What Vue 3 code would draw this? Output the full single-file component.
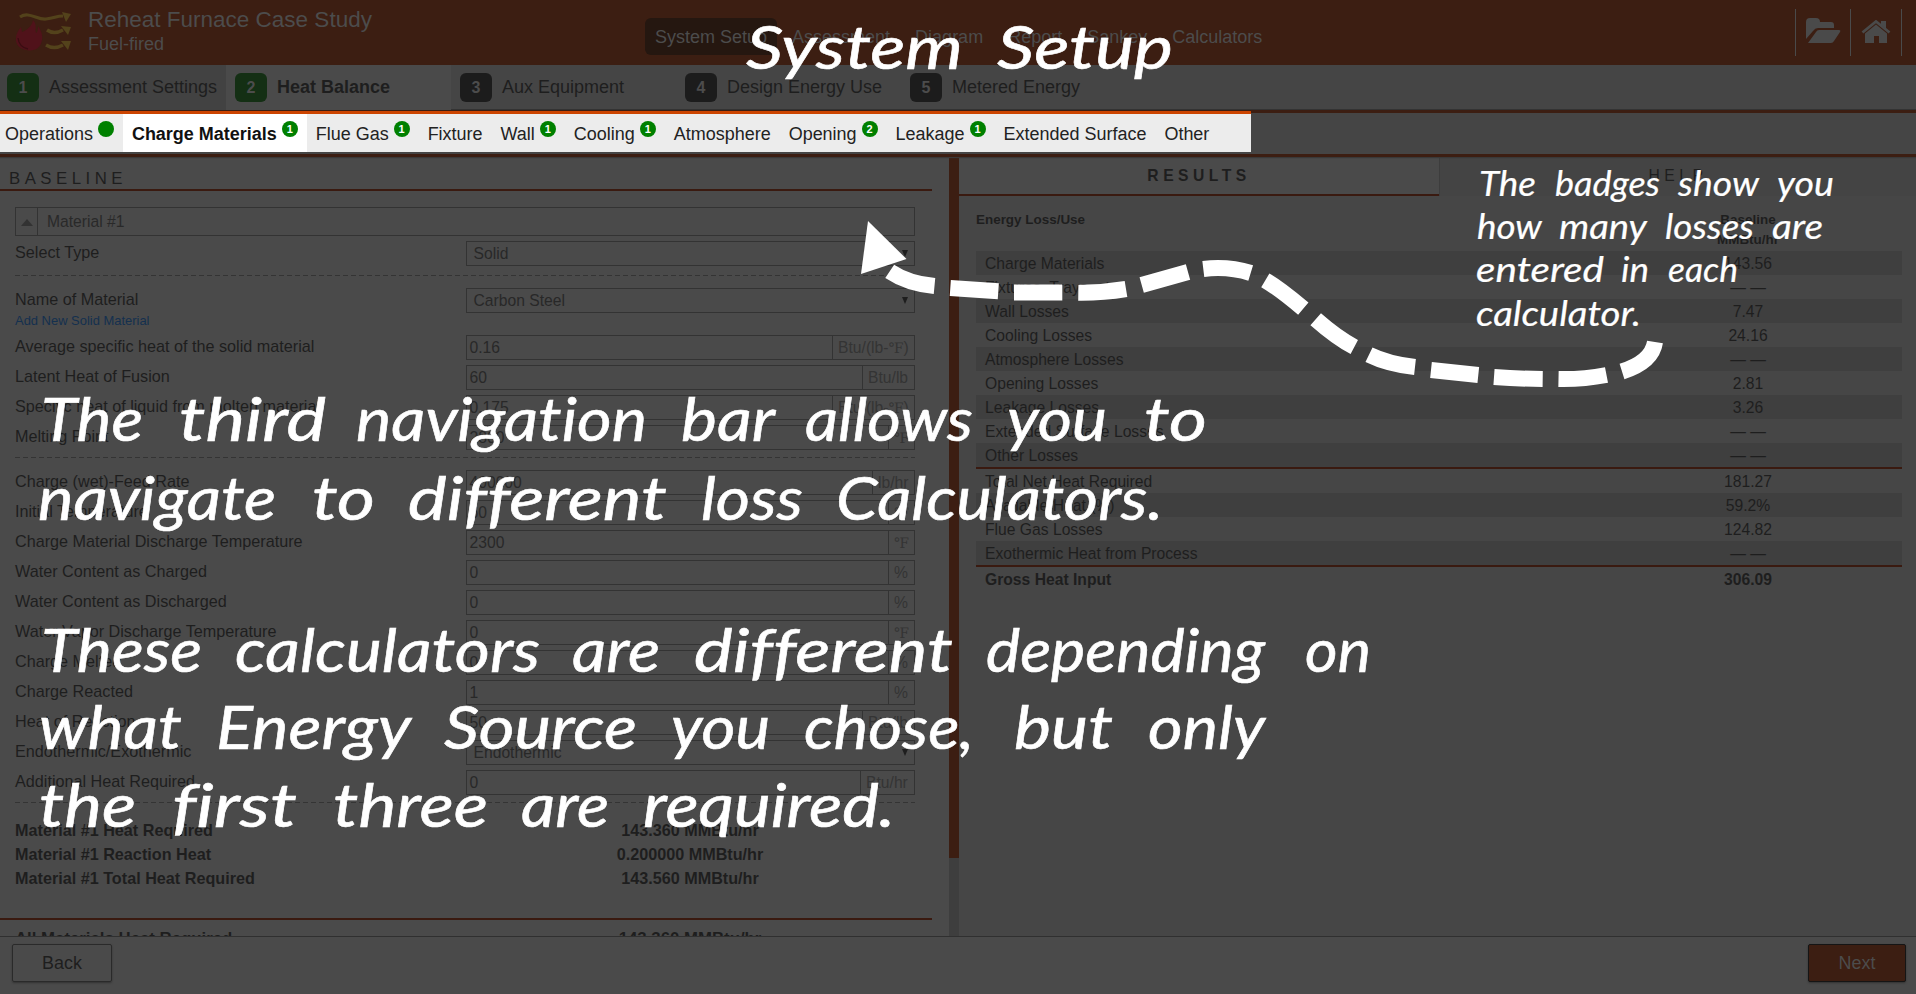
<script setup>
const nav = ['System Setup', 'Assessment', 'Diagram', 'Report', 'Sankey', 'Calculators']
const steps = ['Assessment Settings', 'Heat Balance', 'Aux Equipment', 'Design Energy Use', 'Metered Energy']
const tabs = [
  { t: 'Operations', b: ' ' },
  { t: 'Charge Materials', b: '1' },
  { t: 'Flue Gas', b: '1' },
  { t: 'Fixture' },
  { t: 'Wall', b: '1' },
  { t: 'Cooling', b: '1' },
  { t: 'Atmosphere' },
  { t: 'Opening', b: '2' },
  { t: 'Leakage', b: '1' },
  { t: 'Extended Surface' },
  { t: 'Other' }
]
const groupA = [
  { l: 'Average specific heat of the solid material', v: '0.16', u: 'Btu/(lb-', f: true, e: ')', w: 82 },
  { l: 'Latent Heat of Fusion', v: '60', u: 'Btu/lb', w: 52 },
  { l: 'Specific heat of liquid from molten material', v: '0.175', u: 'Btu/(lb-', f: true, e: ')', w: 82 },
  { l: 'Melting Point', v: '2800', f: true, w: 26 }
]
const groupB = [
  { l: 'Charge (wet)-Feed Rate', v: '400000', u: 'lb/hr', w: 42 },
  { l: 'Initial Temperature', v: '60', f: true, w: 26 },
  { l: 'Charge Material Discharge Temperature', v: '2300', f: true, w: 26 },
  { l: 'Water Content as Charged', v: '0', u: '%', w: 26 },
  { l: 'Water Content as Discharged', v: '0', u: '%', w: 26 },
  { l: 'Water Vapor Discharge Temperature', v: '0', f: true, w: 26 },
  { l: 'Charge Melted', v: '0', u: '%', w: 26 },
  { l: 'Charge Reacted', v: '1', u: '%', w: 26 },
  { l: 'Heat of Reaction', v: '50', u: 'Btu/lb', w: 52 },
  { l: 'Endothermic/Exothermic', v: 'Endothermic', select: true },
  { l: 'Additional Heat Required', v: '0', u: 'Btu/hr', w: 54 }
]
const summary = [
  ['Material #1 Heat Required', '143.360 MMBtu/hr'],
  ['Material #1 Reaction Heat', '0.200000 MMBtu/hr'],
  ['Material #1 Total Heat Required', '143.560 MMBtu/hr']
]
const results = [
  ['Charge Materials', '143.56'],
  ['Fixtures, Trays, etc.', '— —'],
  ['Wall Losses', '7.47'],
  ['Cooling Losses', '24.16'],
  ['Atmosphere Losses', '— —'],
  ['Opening Losses', '2.81'],
  ['Leakage Losses', '3.26'],
  ['Extended Surface Losses', '— —'],
  ['Other Losses', '— —'],
  ['Total Net Heat Required', '181.27'],
  ['Available Heat (%)', '59.2%'],
  ['Flue Gas Losses', '124.82'],
  ['Exothermic Heat from Process', '— —'],
  ['Gross Heat Input', '306.09']
]
/* Annotation lines: baseline y, then [word, left, right] */
const big = [
  { y: 69, w: [['System', 746, 963], ['Setup', 997, 1173]] },
  { y: 441, w: [['The', 41, 143], ['third', 179, 326], ['navigation', 356, 647], ['bar', 681, 775], ['allows', 805, 973], ['you', 1007, 1107], ['to', 1144, 1207]] },
  { y: 520, w: [['navigate', 38, 276], ['to', 312, 375], ['different', 408, 667], ['loss', 701, 803], ['Calculators.', 836, 1163]] },
  { y: 672, w: [['These', 41, 202], ['calculators', 235, 540], ['are', 572, 660], ['different', 694, 953], ['depending', 986, 1265], ['on', 1305, 1371]] },
  { y: 749, w: [['what', 39, 182], ['Energy', 216, 411], ['Source', 444, 637], ['you', 671, 770], ['chose,', 804, 974], ['but', 1014, 1113], ['only', 1148, 1265]] },
  { y: 827, w: [['the', 39, 136], ['first', 172, 297], ['three', 333, 488], ['are', 521, 609], ['required.', 643, 895]] }
]
const small = [
  { y: 196, w: [['The', 1479, 1536], ['badges', 1555, 1660], ['show', 1678, 1759], ['you', 1777, 1834]] },
  { y: 239, w: [['how', 1477, 1542], ['many', 1559, 1647], ['losses', 1665, 1754], ['are', 1772, 1823]] },
  { y: 282, w: [['entered', 1476, 1604], ['in', 1621, 1649], ['each', 1668, 1738]] },
  { y: 326, w: [['calculator.', 1476, 1641]] }
]
const dashes = [
  'M889.7 271.3Q908 283.5 934.5 286', 'M950.3 288L998.3 291.3', 'M1014 292.5H1062.3',
  'M1078.3 292.7Q1102 293 1126 289', 'M1141.7 285L1188 272', 'M1203.3 269Q1228 266 1250.7 273',
  'M1265.3 280.3Q1280 289 1303.3 308.7', 'M1315.7 319.3Q1337 338 1354.3 347', 'M1369 354.7Q1388 364 1415 367',
  'M1431 370L1478.3 375', 'M1494 377Q1518 378.7 1542.7 379', 'M1558.5 379Q1583 379.5 1606.5 375',
  'M1622 371.5Q1652 362 1655 342'
].join('')
</script>

<template>
  <div class="page">
    <header class="top">
      <svg class="logo" width="58" height="42" viewBox="14 11 58 42">
        <path d="M20 17C29 11 37 20 46 19S56 16 63 16" fill="none" stroke="#53421b" stroke-width="3.2" />
        <path d="M62 12L71 14L66 22Z" fill="#53421b" />
        <path d="M47 30Q54 35 63 30" fill="none" stroke="#53421b" stroke-width="3.4" />
        <path d="M61 26L71 27L68 35Z" fill="#53421b" />
        <path d="M46 45Q54 50 63 45" fill="none" stroke="#53421b" stroke-width="3.4" />
        <path d="M61 41L71 41L68 50Z" fill="#53421b" />
        <path d="M33 20C38 25 34 31 36.500 33C38 31 38 28 38 26C41 31 43 35 42 40C41 47 36 51 29 50.500C21 50 15 45 16 38C16 34 18 31 21 27L22 32C27 30 32 26 33 20Z" fill="#50121a" />
        <path d="M18 38Q19 47 28 49" fill="none" stroke="#3a0d12" stroke-width="1.3" />
      </svg>
      <div class="names">
        <div class="name">Reheat Furnace Case Study</div>
        <div class="kind">Fuel-fired</div>
      </div>
      <nav class="mainnav">
        <span v-for="(n, i) in nav" :key="n" :class="{ on: i === 0 }">{{ n }}</span>
      </nav>
      <div class="tools">
        <div class="tool folder">
          <svg width="35" height="26" viewBox="0 0 35 26"><path d="M0 21V4Q0 0 4 0H10Q14 0 14 4H25Q28 4 28 7V10H12Q9 10 7 13Z M2 25L10 14Q11 12 13 12H33Q35 12 34 14L28 23Q27 25 25 25Z" fill="#4a4a4a" /></svg>
        </div>
        <div class="tool house">
          <svg width="30" height="24" viewBox="0 0 30 24"><path d="M1.5 12.5L15 1.5L28.5 12.5" fill="none" stroke="#4a4a4a" stroke-width="2.8" /><path d="M20 1H25V9L20 5ZM4 13.5L15 4.5L26 13.5V23H18V16H13V23H4Z" fill="#4a4a4a" /></svg>
        </div>
      </div>
    </header>

    <div class="steps">
      <div v-for="(s, i) in steps" :key="s" class="step" :class="{ cur: i === 1 }">
        <b :class="{ done: i < 2 }">{{ i + 1 }}</b><span>{{ s }}</span>
      </div>
    </div>

    <div class="tabbar">
      <div class="tabs">
        <div v-for="(t, i) in tabs" :key="t.t" class="tab" :class="{ act: i === 1 }">
          {{ t.t }}<i v-if="t.b">{{ t.b }}</i>
        </div>
      </div>
    </div>

    <main class="body">
      <section class="left">
        <h2>BASELINE</h2>
        <div class="form">
          <div class="mat"><span class="tog"><svg width="12" height="7" viewBox="0 0 12 7"><path d="M6 0L12 7H0Z" fill="#323232" /></svg></span><span>Material #1</span></div>
          <div class="row"><label>Select Type</label><div class="box sel"><span>Solid</span><em></em></div></div>
          <div class="dash"></div>
          <div class="row named"><label>Name of Material</label><div class="box sel"><span>Carbon Steel</span><em></em></div></div>
          <div class="link">Add New Solid Material</div>
          <div v-for="r in groupA" :key="r.l" class="row">
            <label>{{ r.l }}</label>
            <div class="box"><span>{{ r.v }}</span><u :style="{ width: r.w + 'px' }">{{ r.u }}<q v-if="r.f">℉</q>{{ r.e }}</u></div>
          </div>
          <div class="dash d2"></div>
          <div v-for="r in groupB" :key="r.l" class="row">
            <label>{{ r.l }}</label>
            <div v-if="r.select" class="box sel"><span>{{ r.v }}</span><em></em></div>
            <div v-else class="box"><span>{{ r.v }}</span><u :style="{ width: r.w + 'px' }">{{ r.u }}<q v-if="r.f">℉</q></u></div>
          </div>
          <div class="dash d3"></div>
          <div v-for="s in summary" :key="s[0]" class="sum"><span>{{ s[0] }}</span><span class="val">{{ s[1] }}</span></div>
        </div>
        <div class="total"><span>All Materials Heat Required</span><span class="val">143.360 MMBtu/hr</span></div>
      </section>
      <div class="scroll"><div class="thumb"></div></div>
      <section class="right">
        <div class="rtabs"><div class="rt on">RESULTS</div><div class="rt">HELP</div></div>
        <div class="table">
          <div class="thead"><span>Energy Loss/Use</span><span class="num">Baseline<br>MMBtu/hr</span></div>
          <div v-for="(r, i) in results" :key="r[0]" class="tr" :class="{ odd: i % 2 === 0 && i < 9 || i === 10 || i === 12, line: i === 8 || i === 12, gross: i === 13 }">
            <span>{{ r[0] }}</span><span class="num">{{ r[1] }}</span>
          </div>
        </div>
      </section>
    </main>

    <footer class="foot"><div class="btn">Back</div><div class="btn next">Next</div></footer>

    <svg class="notes" width="1916" height="994" viewBox="0 0 1916 994">
      <path :d="dashes" fill="none" stroke="#fff" stroke-width="16" />
      <path d="M868 221L906.5 259L861 274Z" fill="#fff" />
      <g class="big">
        <template v-for="l in big" :key="l.y">
          <text v-for="w in l.w" :key="w[1]" :x="w[1]" :y="l.y" :textLength="w[2] - w[1]" lengthAdjust="spacingAndGlyphs">{{ w[0] }}</text>
        </template>
      </g>
      <g class="small">
        <template v-for="l in small" :key="l.y">
          <text v-for="w in l.w" :key="w[1]" :x="w[1]" :y="l.y" :textLength="w[2] - w[1]" lengthAdjust="spacingAndGlyphs">{{ w[0] }}</text>
        </template>
      </g>
    </svg>
  </div>
</template>

<style scoped>
* { box-sizing: border-box; }
.page { position: relative; width: 1916px; height: 994px; overflow: hidden; display: flex; flex-direction: column; background: #464646; color: #1e1e1e; font-family: "Liberation Sans", Arial, sans-serif; font-size: 16.2px; white-space: nowrap; }
.top { height: 65px; flex: none; display: flex; background: #3c1e12; color: #4c4c4c; }
.logo { margin: 11px 0 0 14px; flex: none; }
.names { width: 573px; padding: 7px 0 0 16px; flex: none; }
.name { font-size: 22.5px; line-height: 26px; }
.kind { font-size: 18px; line-height: 21px; margin-top: 1px; }
.mainnav { display: flex; gap: 5px; padding-top: 18px; font-size: 18px; }
.mainnav span { height: 37px; line-height: 38px; padding: 0 10px; border-radius: 6px; }
.mainnav .on { background: #251710; }
.tools { margin: 9px 14px 0 auto; height: 47px; display: flex; border-right: 1px solid #4a4a4a; }
.tool { border-left: 1px solid #4a4a4a; }
.folder { width: 55px; padding: 9px 0 0 10px; }
.house { width: 51px; padding: 11px 0 0 10px; }
.steps { height: 45px; flex: none; display: flex; background: #454545; border-bottom: 1px solid #333; font-size: 18px; }
.step { width: 225px; display: flex; align-items: center; padding-left: 9px; height: 45px; }
.step:first-child { width: 226px; padding-left: 7px; background: #424242; }
.step b { width: 32px; height: 29px; line-height: 30px; margin-right: 10px; border-radius: 6px; text-align: center; background: #1c1c1c; color: #4c4c4c; font-size: 16px; }
.step b.done { background: #142f14; }
.cur { background: #4a4a4a; font-weight: bold; }
.tabbar { height: 47px; flex: none; background: #454545; border-top: 3px solid #3c1e12; border-bottom: 3px solid #3c1e12; box-shadow: 0 1px 1px #393939; position: relative; z-index: 1; }
.tabs { width: 1251px; height: 41px; margin-top: -2px; border-top: 3px solid #cc4400; display: flex; background: #ececec; color: #222; font-size: 17.98px; position: relative; }
.tab { display: flex; padding: 0 9px; line-height: 40px; height: 38px; }
.tab:first-child { padding-left: 5px; }
.act { background: #fff; font-weight: bold; color: #111; }
.tab i { width: 16px; height: 16px; border-radius: 50%; background: #008000; color: #fff; font: bold 11px/16px "Liberation Sans", Arial, sans-serif; text-align: center; margin: 7px 0 0 5px; }
.body { height: 779px; flex: none; display: flex; overflow: hidden; }
.left { width: 949px; background: #4a4a4a; overflow: hidden; height: 779px; flex: none; }
h2 { margin: 0; width: 932px; height: 34px; padding: 11px 0 0 9px; font-weight: normal; font-size: 16.8px; line-height: 22px; letter-spacing: 4.48px; border-bottom: 2px solid #3a1a10; }
.form { width: 900px; margin: 16px 0 0 15px; height: 711px; display: flex; flex-direction: column; }
.mat { height: 29px; border: 1px solid #333; display: flex; margin-bottom: 5px; line-height: 27px; font-size: 15.68px; color: #292929; }
.tog { width: 22px; border-right: 1px solid #333; margin-right: 9px; padding-left: 5px; }
.tog svg { vertical-align: 1px; }
.row { height: 25px; margin-bottom: 5px; display: flex; }
.row label { width: 450.5px; line-height: 22px; }
.box { flex: 1; border: 1px solid #333; display: flex; font-size: 15.68px; line-height: 24px; color: #282828; padding-left: 3px; }
.box.sel { padding-left: 7px; }
.box em { margin: 8px 6px 0 auto; width: 0; height: 0; align-self: flex-start; border: 3.5px solid transparent; border-top: 7px solid #1e1e1e; border-bottom: 0; }
.box u { margin-left: auto; border-left: 1px solid #333; text-decoration: none; padding-left: 5px; color: #343434; }
.box q { quotes: none; font-family: "DejaVu Serif", "Liberation Serif", serif; font-size: 14.4px; line-height: 20px; }
.dash { height: 1px; margin: 4px 0 12px; background: repeating-linear-gradient(90deg, #343434 0 5px, transparent 5px 8px); }
.row.named { margin: 0; }
.link { height: 22px; line-height: 15px; font-size: 12.95px; color: #14304f; }
.dash.d2 { margin: 2px 0 12px; }
.dash.d3 { margin: 2px 0 15px; }
.sum, .total { display: flex; font-weight: bold; height: 24px; line-height: 24px; }
.sum span:first-child { width: 450px; }
.val { flex: 1; text-align: center; }
.total { width: 932px; border-top: 2px solid #3a1a10; padding: 9px 17px 0 15px; font-size: 16.8px; line-height: 20px; height: 40px; }
.total span:first-child { width: 450px; flex: none; }
.scroll { width: 10px; background: #3e3e3e; flex: none; }
.thumb { height: 701px; background: #3c1e12; }
.right { flex: 1; background: #464646; }
.rtabs { display: flex; height: 39px; font-size: 15.68px; letter-spacing: 4.48px; text-align: center; line-height: 38px; }
.rt { flex: 1; background: #444; border-left: 1px solid #3d3d3d; }
.rt.on { flex: 0 0 480px; background: #4a4a4a; border: 0; border-bottom: 2px solid #3a1a10; font-weight: bold; }
.table { width: 926px; margin: 14px 0 0 17px; font-size: 15.68px; }
.thead { display: flex; justify-content: space-between; height: 41px; line-height: 20.3px; font-size: 13.44px; font-weight: bold; }
.num { width: 308px; text-align: center; }
.tr { height: 24px; line-height: 25px; display: flex; justify-content: space-between; padding-left: 9px; }
.odd { background: #3f3f3f; }
.line { height: 26px; border-bottom: 2px solid #3a1a10; }
.gross { font-weight: bold; }
.foot { height: 58px; flex: none; border-top: 1px solid #303030; background: #4a4a4a; display: flex; justify-content: space-between; padding: 7px 10px 0 12px; position: relative; }
.btn { width: 100px; height: 38px; border: 1px solid #2a2a2a; border-radius: 2px; line-height: 36px; text-align: center; font-size: 17.92px; box-shadow: 0 1px 2px #333; }
.next { width: 98px; background: #3c1e12; border-color: #151515; color: #4c4c4c; }
.notes { position: absolute; left: 0; top: 0; z-index: 2; }
.notes text { fill: #fff; font-family: Lato, sans-serif; font-style: italic; font-variant-ligatures: none; }
.big { font-size: 61px; stroke: #fff; stroke-width: 0.6px; }
.small { font-size: 34px; stroke: #fff; stroke-width: 0.2px; }
</style>

<style>
body { margin: 0; }
</style>
